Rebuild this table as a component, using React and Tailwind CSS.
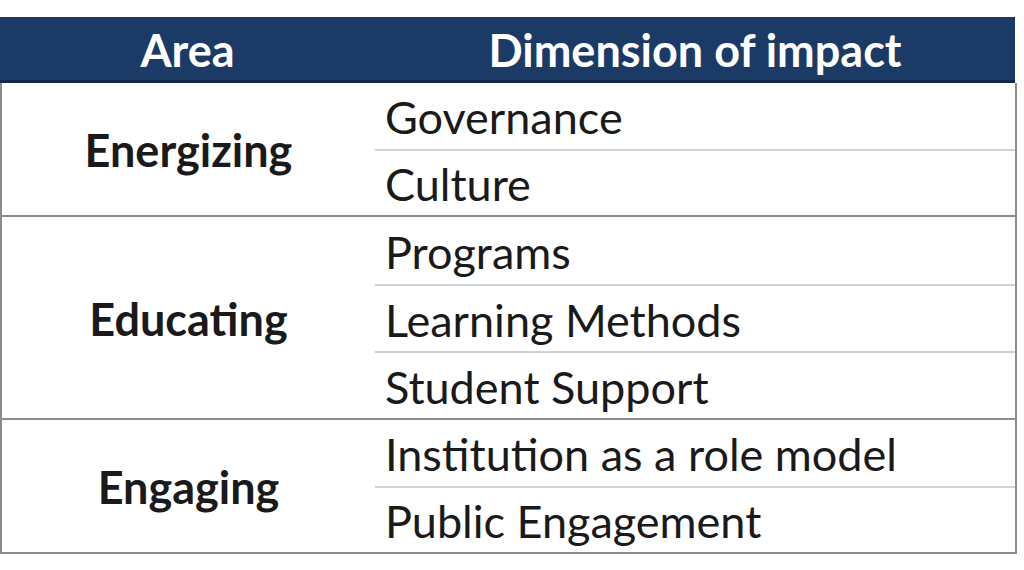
import React from "react";

const groups = [
  { area: "Energizing", items: ["Governance", "Culture"], row: "h-[66px]" },
  { area: "Educating", items: ["Programs", "Learning Methods", "Student Support"], row: "h-[67px]" },
  { area: "Engaging", items: ["Institution as a role model", "Public Engagement"], row: "h-[66px]" },
];

export default function App() {
  return (
    <div className="w-[1024px] h-[570px] bg-white pt-[17px]" style={{ fontFamily: "Lato, 'Open Sans', sans-serif" }}>
      <div className="w-[1017px]">
        <div className="flex h-[66px] bg-[#1b3a66] border-b-[3px] border-[#12294d] text-white font-bold text-[45px] w-[1015px] pt-[5px]">
          <div className="w-[375px] flex items-center justify-center">Area</div>
          <div className="flex-1 flex items-center justify-center">Dimension of impact</div>
        </div>
        {groups.map((g) => (
          <div key={g.area} className="flex border-l-2 border-r-2 border-b-2 border-[#8c8c8c] text-[#1a1a1a]">
            <div className="w-[373px] flex items-center justify-center font-bold text-[45px] pt-[4px]">{g.area}</div>
            <div className="flex-1 flex flex-col">
              {g.items.map((it, i) => (
                <div
                  key={it}
                  className={`${g.row} flex items-center pl-[10px] pt-[4px] text-[45px] ${i > 0 ? "border-t-2 border-[#cdd3d8]" : ""}`}
                >
                  {it}
                </div>
              ))}
            </div>
          </div>
        ))}
      </div>
    </div>
  );
}
